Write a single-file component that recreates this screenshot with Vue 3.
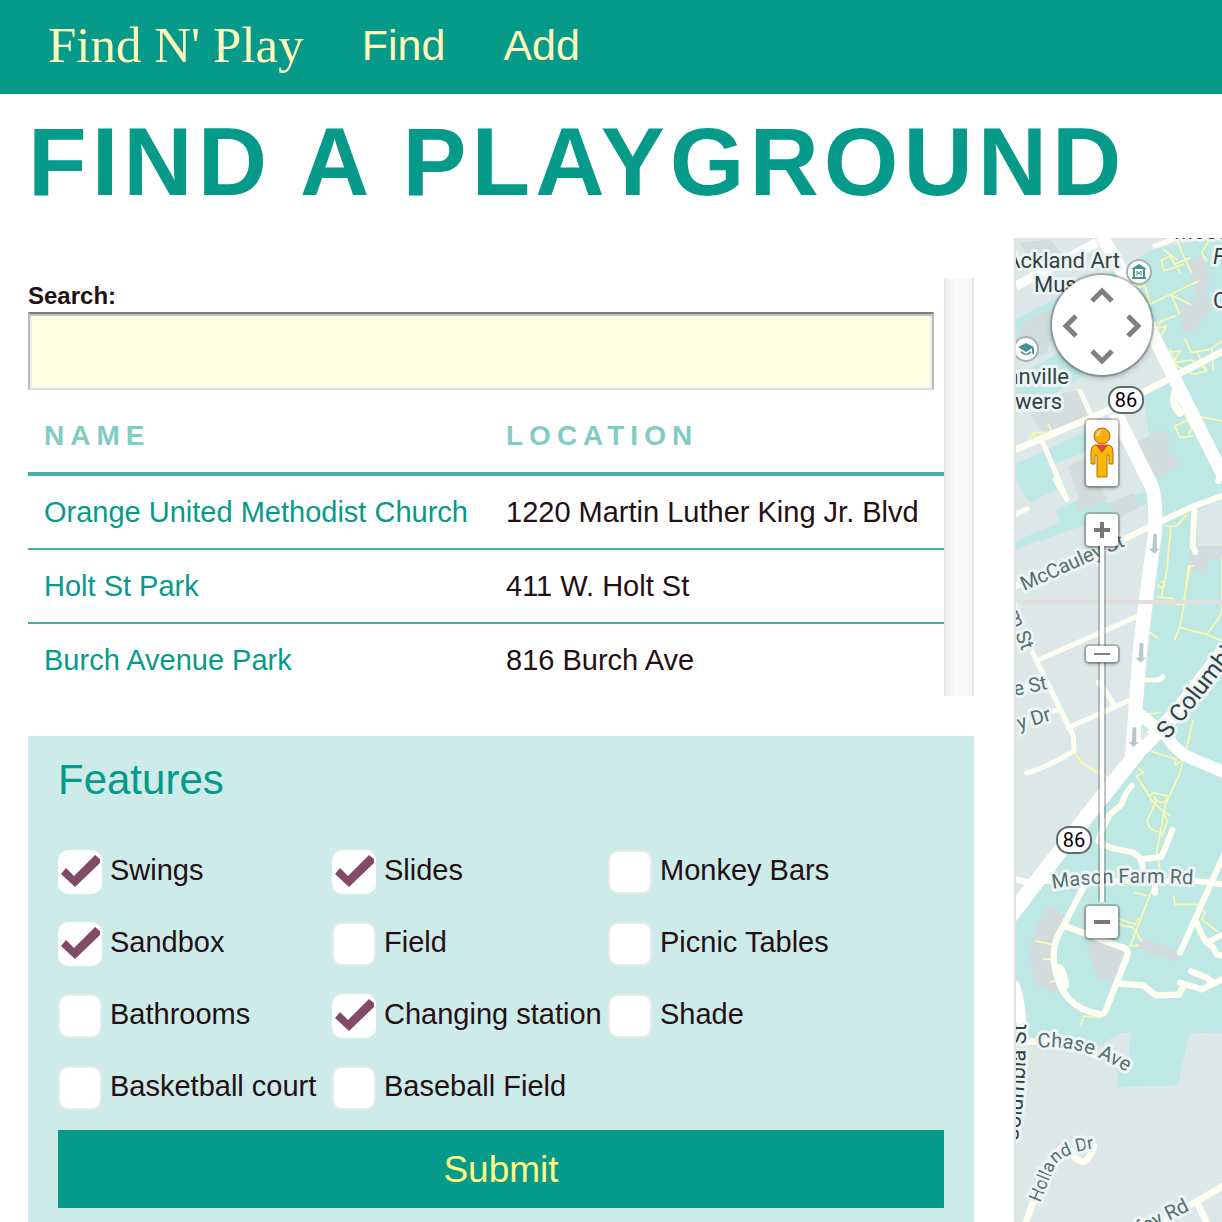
<script setup>
import { ref } from 'vue'

const query = ref('')
const zoom = ref(12)

const playgrounds = [
  { name: 'Orange United Methodist Church', location: '1220 Martin Luther King Jr. Blvd' },
  { name: 'Holt St Park', location: '411 W. Holt St' },
  { name: 'Burch Avenue Park', location: '816 Burch Ave' }
]

const features = ref([
  { label: 'Swings', on: true },
  { label: 'Slides', on: true },
  { label: 'Monkey Bars', on: false },
  { label: 'Sandbox', on: true },
  { label: 'Field', on: false },
  { label: 'Picnic Tables', on: false },
  { label: 'Bathrooms', on: false },
  { label: 'Changing station', on: true },
  { label: 'Shade', on: false },
  { label: 'Basketball court', on: false },
  { label: 'Baseball Field', on: false }
])

const directions = ['up', 'left', 'right', 'down']
</script>

<template>
  <div class="page">
    <header class="bar">
      <a class="brand" href="#">Find N' Play</a>
      <nav class="nav">
        <a href="#find">Find</a>
        <a href="#add">Add</a>
      </nav>
    </header>

    <h1 class="title">FIND A PLAYGROUND</h1>

    <main class="content">
      <div class="side">
        <section class="results">
          <div class="list">
            <label class="search-label" for="search">Search:</label>
            <input id="search" v-model="query" class="search" type="text" />
            <table class="table">
              <thead>
                <tr><th class="name-col">NAME</th><th>LOCATION</th></tr>
              </thead>
              <tbody>
                <tr v-for="p in playgrounds" :key="p.name">
                  <td><a href="#playground">{{ p.name }}</a></td>
                  <td>{{ p.location }}</td>
                </tr>
              </tbody>
            </table>
          </div>
          <div class="track"></div>
        </section>

        <form class="features" @submit.prevent>
          <h2>Features</h2>
          <div class="options">
            <label v-for="f in features" :key="f.label" class="option">
              <input v-model="f.on" type="checkbox" />
              <svg class="tick" viewBox="0 0 44 44" aria-hidden="true">
                <path d="M3 24 L8 18 L16 26 L37 5 L42 9 V13 L17 37 Z" fill="#814a66" />
              </svg>
              <span>{{ f.label }}</span>
            </label>
          </div>
          <button class="submit" type="submit">Submit</button>
        </form>
      </div>

      <section class="map" aria-label="Map">
        <svg class="ground" aria-hidden="true">
          <g transform="matrix(.333333 0 0 .333333 -4 -2)" fill="none" stroke-linecap="round" stroke-linejoin="round">
            <!-- parks and campus -->
            <g fill="#bde8e3">
              <path d="M18 250 L170 170 L260 130 L350 90 L430 40 L640 0 V710 L500 430 L430 300 L400 350 L250 400 L140 470 L18 500 V420 L150 350 L130 300 L18 320Z" />
              <path d="M400 480 L490 425 L640 700 V790 L455 870 L440 750Z" />
              <path d="M18 685 L250 575 L270 630 L120 690 L160 750 L60 800 L18 735Z" />
              <path d="M18 915 L150 860 L135 820 L240 780 L300 800 L420 762 L420 800 L330 830 L18 940Z" />
              <path d="M455 860 L640 770 V2390 L555 2391 Q538 2392 533 2412 L508 2530 Q504 2549 490 2550 L322 2552 L328 2391 L270 2430 L60 2420 L18 2290 V2052 L390 1560 L400 1400Z" />
            </g>
            <path d="M130 480 L210 460 L240 540 L100 590 L60 540Z" fill="#d4dddd" />
            <g fill="#dce8e8">
              <path d="M18 6 H430 L410 40 L310 90 L130 150 L18 200Z" />
              <path d="M562 820 L640 790 V965 H562Z" />
              <path d="M328 2391 H361 L352 2500 L322 2500Z" />
              <path d="M200 450 L430 320 L480 420 L290 510 L230 530Z" />
            </g>
            <!-- building blocks -->
            <g fill="#d3dcdc">
              <path d="M30 20 L120 10 L170 70 L80 110Z M40 260 L150 210 L180 250 L130 290 L110 350 L60 370 L18 350Z" />
              <path d="M530 80 L575 60 L600 120 L585 170 L610 210 L560 280 L520 290 L505 210 L560 190Z" />
              <path d="M375 620 L460 580 L480 610 L470 640 L510 690 L440 725 L400 680Z" />
              <path d="M205 780 L175 690 L240 660 L290 790 L200 830Z M300 800 L370 770 L385 815 L310 855Z" />
              <path d="M540 930 H640 V970 H592 V1016 L540 1000Z" />
              <path d="M115 2008 L165 2040 L125 2110 L130 2240 L165 2250 L130 2270 L75 2250 L58 2150 L75 2080Z" />
              <path d="M232 2140 L265 2090 L345 2140 L320 2240 L265 2230Z M390 2100 L512 2150 L495 2176 L380 2135Z M220 2020 L265 2040 L240 2070 L210 2060Z" />
            </g>
            <path d="M70 290 L110 265 L130 310 L85 345Z" stroke="#bde8e3" stroke-width="6" />
            <!-- foot paths -->
            <g stroke="#fcf8ae" stroke-width="5">
              <path d="M450 75 L480 60 L495 85 L540 65 M455 75 L462 105 L520 85 M505 20 L520 60 L545 110 M480 60 L510 110 M460 40 L500 70 M600 10 L575 50 L590 75" />
              <path d="M380 155 L405 150 L420 205 L565 135 M485 178 L508 232 M485 178 L540 205 M430 265 L495 240 M430 280 L470 270 L440 320 L470 350 L510 345 L490 380 L545 372 L590 400 M470 350 L500 390 L480 340 M525 310 L545 350 L600 340 L636 315 M560 345 L590 405 L550 415 L500 390 M605 340 L610 400 M450 265 Q410 290 460 330" />
              <path d="M636 555 L560 540 L495 570 L510 605 L550 600 M525 535 L545 575 L535 600 M55 610 L70 590 H130 M115 565 L125 590 M70 590 L75 610" />
              <path d="M465 870 H500 L530 835 M482 870 L472 995 L455 1080 M440 1083 L490 1088 M445 1045 A9 9 0 1 0 455 1037 M550 990 H535 L522 1105 L500 1105 M522 1105 L510 1172 L495 1210 M540 995 L522 1090 M510 1175 L590 1195 L610 1170 L636 1130 V960 M590 1195 L636 1215 M420 1190 L445 1207 M570 1310 L550 1370 M540 1335 H590 M410 1435 L450 1430 M550 1452 L510 1610 L465 1710 L440 1850 L450 1900 L360 2130" />
              <path d="M195 1550 L220 1585 L305 1632 M420 1545 L500 1570 Q480 1605 530 1560 M540 1500 L535 1520 M385 1595 L400 1610 L380 1620 L430 1700 Q410 1680 430 1670 L470 1680 Q475 1695 455 1700 Q430 1695 435 1680 M430 1700 L460 1725 L480 1740 M440 1690 L412 1755 Q415 1785 460 1790 M455 1720 L472 1755 L455 1800 M375 1970 L410 1980 M325 2048 L375 2065 L385 2050 M325 2065 L370 2075 L395 2115 M360 2130 L385 2128 M492 1980 L495 2005 L560 2005 L585 2030 L575 2050 L620 2085 M78 2115 L125 2125 M100 2170 H130 M120 2240 L150 2225 M212 2365 L222 2340 L270 2345" />
            </g>
            <!-- streets -->
            <g stroke="#fffef2" stroke-width="15">
              <path d="M18 640 L290 525 L640 345" stroke-width="20" />
              <path d="M210 465 L240 530 M95 610 L170 790 M435 30 L500 6 M135 730 L170 790 M18 835 L52 818" />
              <path d="M500 460 Q480 500 510 530" stroke-width="24" />
              <path d="M18 1050 L340 910 L540 815 L640 778 M553 825 L548 930 L556 948 M640 700 L625 735" stroke-width="18" />
              <path d="M90 1270 L385 1140 M68 1250 L190 1500 L192 1545 Q120 1590 50 1611 M175 1475 L365 1390 M265 1340 Q300 1380 310 1405 M18 1370 L55 1350 M18 1455 L150 1420 M410 1332 H440 Q455 1330 458 1322" />
              <path d="M365 1650 Q345 1670 335 1705 L300 1735 Q270 1790 265 1815 M265 1815 L300 1835 L370 1850 Q400 1865 398 1900 V1910 M398 1870 L455 1862 L487 1782 M18 1930 Q60 1945 100 1935 H560 L640 1945 M435 1935 V1970 M640 1860 L510 2150 M560 2060 Q580 2110 590 2120 L610 2135 L620 2155 L640 2160 M590 2120 L640 2095" stroke-width="18" />
              <path d="M225 1945 L160 2070 Q125 2120 132 2180 Q150 2320 275 2335 Q285 2332 292 2310 L350 2165 Q358 2140 340 2135 L165 2070 M150 2195 Q165 2210 168 2250 Q155 2260 145 2220 M325 2243 L400 2248 Q425 2270 440 2278 L507 2276 L520 2250 M510 2240 L575 2260 L636 2230 M543 2206 L590 2225 L610 2240" stroke-width="19" />
              <path d="M18 2417 H100 Q190 2415 260 2460 M45 2965 L80 2870 Q110 2790 150 2740 M180 2740 Q190 2772 220 2778 Q235 2774 252 2730 L240 2715 M560 2896 L640 2850 M560 2896 L600 2980 M560 2896 L420 2975" stroke-width="20" />
            </g>
            <!-- main roads -->
            <g stroke="#fff" stroke-linecap="butt">
              <path d="M18 150 L260 20" stroke-width="28" />
              <path d="M275 0 L330 95 L490 420 L645 730" stroke-width="40" />
              <path d="M315 530 L425 750 Q440 800 435 890 Q395 1180 388 1260 L365 1580" stroke-width="42" />
              <path d="M645 1240 L500 1430 L390 1540 L200 1780 L-20 2068" stroke-width="46" />
              <path d="M370 1420 L470 1500 Q500 1550 540 1565 L645 1610" stroke-width="36" />
              <path d="M10 2240 Q40 2300 32 2430" stroke-width="30" />
            </g>
            <path d="M395 1475 L418 1495 L395 1515Z" fill="#dce8e8" />
            <g fill="#b9c9c9">
              <path id="arrow" d="M430 894 H441 V938 H449 L433 953 L417 938 H427Z" />
              <use href="#arrow" x="-41" y="327" />
              <use href="#arrow" x="-62" y="580" />
            </g>
            <path d="M18 1098 H640" stroke="#e0dfdc" stroke-width="12" stroke-linecap="butt" />
          </g>

          <!-- labels -->
          <defs>
            <path id="mason" d="M39 651 Q90 641 190 647" />
            <path id="chase" d="M24 810 Q68 804 122 840" />
            <path id="holland" d="M26 965 L40 930 Q46 915 84 910" />
            <path id="columbia" d="M-6 940 Q12 890 12 786" />
          </defs>
          <g class="label">
            <text x="106" y="30" text-anchor="end">Ackland Art</text>
            <text x="20" y="54">Mus</text>
            <text x="55" y="146" text-anchor="end">Granville</text>
            <text x="48" y="171" text-anchor="end">Towers</text>
            <text x="160" y="1">Mose</text>
            <text x="199" y="26" font-style="italic">F</text>
            <text x="199" y="70">C</text>
            <text class="big" transform="translate(154 502) rotate(-52)">S Columbia</text>
            <text><textPath href="#columbia" startOffset="100%" text-anchor="end">Columbia St</textPath></text>
          </g>
          <g class="label street">
            <text transform="translate(10 353) rotate(-24)">McCauley St</text>
            <text transform="translate(8 413) rotate(68)" text-anchor="end">Ransom St</text>
            <text transform="translate(34 451) rotate(-12)" text-anchor="end">e St</text>
            <text transform="translate(38 482) rotate(-17)" text-anchor="end">y Dr</text>
            <text><textPath href="#mason">Mason Farm Rd</textPath></text>
            <text><textPath href="#chase">Chase Ave</textPath></text>
            <text class="small"><textPath href="#holland">Holland Dr</textPath></text>
            <text transform="translate(176 972) rotate(-27)" text-anchor="end">Purefoy Rd</text>
          </g>

          <!-- route shields -->
          <g class="shield">
            <rect x="95" y="149" width="34" height="26" rx="12" />
            <text x="112" y="169" text-anchor="middle">86</text>
            <rect x="43" y="589" width="34" height="26" rx="12" />
            <text x="60" y="609" text-anchor="middle">86</text>
          </g>

          <!-- places -->
          <g transform="translate(125 34)">
            <circle r="12" fill="#fff" stroke="#a3b5b3" stroke-width="2" />
            <path d="M-8 -3 L0 -8 L8 -3Z M-6 -3 H-4 V5 H-6Z M4 -3 H6 V5 H4Z M-7 5 H7 V7 H-7Z" fill="#46938d" />
            <path d="M-2 4 V-1 L0 2 L2 -1 V4" fill="none" stroke="#46938d" stroke-width="1" />
          </g>
          <g transform="translate(12 111)">
            <circle r="12" fill="#fff" stroke="#a3b5b3" stroke-width="2" />
            <path d="M-8 -2 L0 -6 L8 -2 L0 3Z M-5 2 L0 5 L5 2 V4 Q0 8 -5 4Z M6 -1 H8 V6 L6 4Z" fill="#46938d" />
          </g>
        </svg>

        <div class="pan">
          <button v-for="d in directions" :key="d" :class="d" type="button" :aria-label="'Pan ' + d">
            <svg width="24" height="24" viewBox="0 0 24 24"><path d="M2 17 L12 7 L22 17" fill="none" stroke="#808080" stroke-width="5" /></svg>
          </button>
        </div>
        <button class="control pegman" type="button" aria-label="Street view">
          <svg width="24" height="54" viewBox="0 0 24 54">
            <path d="M5 19 H19 Q23 20 23 25 V38 H19 V29 H17 V51 H7 V29 H5 V38 H1 V25 Q1 20 5 19Z" fill="#f6b800" stroke="#b86b12" stroke-width="1" />
            <path d="M6 19 H18 L12 27Z" fill="#dc4b35" />
            <circle cx="12" cy="10" r="8" fill="#f8ac10" stroke="#b5651d" stroke-width="1" />
            <path d="M6 10 Q7 4 12 4 Q9 7 9 10Z" fill="#ffe389" />
          </svg>
        </button>
        <button class="control plus" type="button" aria-label="Zoom in">
          <svg width="16" height="16" viewBox="0 0 16 16"><path d="M0 8 H16 M8 0 V16" stroke="#777" stroke-width="4" /></svg>
        </button>
        <input v-model="zoom" class="zoom" type="range" min="0" max="17" aria-label="Zoom level" />
        <button class="control minus" type="button" aria-label="Zoom out">
          <svg width="16" height="16" viewBox="0 0 16 16"><path d="M0 8 H16" stroke="#777" stroke-width="4" /></svg>
        </button>
      </section>
    </main>
  </div>
</template>

<style>
body {
  margin: 0;
  background: #fff;
}
</style>

<style scoped>
.page {
  font-family: "Liberation Sans", Arial, sans-serif;
  font-size: 29px;
  color: #231014;
}
.page *,
.page *::before {
  box-sizing: border-box;
}
a {
  color: #059a8a;
  text-decoration: none;
}
.bar {
  display: flex;
  align-items: center;
  gap: 58px;
  height: 94px;
  padding: 0 48px 4px;
  background: #059a8a;
  font-size: 43px;
}
.bar a {
  color: #fff6ba;
}
.brand {
  font-family: "Liberation Serif", serif;
  font-size: 51px;
}
.nav {
  display: flex;
  gap: 58px;
}
.title {
  margin: 0;
  padding: 14px 28px 0;
  height: 144px;
  font-size: 96px;
  line-height: 108px;
  letter-spacing: 5px;
  white-space: nowrap;
  color: #059a8a;
}
.content {
  display: grid;
  grid-template-columns: minmax(0, 946fr) minmax(0, 208fr);
  gap: 40px;
  padding-left: 28px;
}
.side {
  display: flex;
  flex-direction: column;
  gap: 40px;
  padding-top: 40px;
}
.results {
  display: flex;
}
.list {
  flex: 1;
  min-width: 0;
}
.track {
  width: 30px;
  border: 2px solid #e8e8e8;
  border-width: 0 2px;
  background: linear-gradient(90deg, #f0f0f0, #fafafa 40%, #fafafa 80%, #f4f4f4);
}
.search-label {
  display: block;
  height: 34px;
  font-size: 24px;
  font-weight: bold;
  line-height: 36px;
}
.search {
  display: block;
  width: calc(100% - 10px);
  height: 78px;
  padding: 8px;
  border: 2px solid;
  border-color: #7b7d78 #bcbcbc #dcdcdc;
  border-radius: 0;
  box-shadow: inset 0 2px #c3c3b8, inset 2px 0 #eeeee6, inset -2px 0 #eeeee6, inset 0 -2px #fafaf8;
  background: #ffffe3;
  font: inherit;
  outline: none;
}
.table {
  width: 100%;
  border-collapse: separate;
  border-spacing: 0;
  table-layout: fixed;
}
.name-col {
  width: 462px;
}
th {
  height: 86px;
  padding: 10px 16px 0;
  border-bottom: 4px solid #45b0a8;
  text-align: left;
  font-size: 28px;
  letter-spacing: 6px;
  color: #82ccc4;
}
td {
  height: 74px;
  padding: 0 16px;
  white-space: nowrap;
  border-bottom: 2px solid #45b0a8;
}
tbody tr:last-child td {
  height: 72px;
  border-bottom: 0;
}
.features {
  padding: 20px 30px 14px;
  background: #cdebe8;
}
.features h2 {
  margin: 0 0 46px;
  font-size: 42px;
  font-weight: normal;
  line-height: 48px;
  color: #059a8a;
}
.options {
  display: grid;
  grid-template-columns: minmax(0, 274fr) minmax(0, 276fr) minmax(0, 336fr);
  row-gap: 28px;
}
.option {
  position: relative;
  display: flex;
  gap: 8px;
  line-height: 40px;
  white-space: nowrap;
}
.option input {
  appearance: none;
  flex: none;
  width: 44px;
  height: 44px;
  margin: 0;
  border: 2px solid #e9e9e9;
  border-radius: 10px;
  background: #fff;
}
.option input:checked {
  border-color: #fff;
}
.tick {
  display: none;
  position: absolute;
  left: 0;
  top: 0;
  width: 44px;
  height: 44px;
}
.option input:checked + .tick {
  display: block;
}
.submit {
  display: block;
  width: 100%;
  height: 78px;
  margin-top: 20px;
  padding: 2px 0 0;
  border: 0;
  background: #059a8a;
  color: #fffa85;
  font: inherit;
  font-size: 37px;
}
.map {
  position: relative;
  overflow: hidden;
  background: #dce8e8;
  border-left: 2px solid #e0e0de;
}
.ground {
  position: absolute;
  left: -2px;
  top: 0;
  width: calc(100% + 2px);
  height: 100%;
}
.label {
  font-family: Roboto, sans-serif;
  font-size: 22px;
  fill: #2f4344;
  stroke: #edf4f3;
  stroke-width: 6px;
  stroke-linejoin: round;
  paint-order: stroke;
}
.street {
  font-size: 20px;
  fill: #52706d;
}
.big {
  font-size: 24px;
}
.small {
  font-size: 18px;
}
.shield {
  font-family: Roboto, sans-serif;
  font-size: 20px;
}
.shield rect {
  fill: #fff;
  stroke: #606b6b;
  stroke-width: 2px;
}
.pan {
  position: absolute;
  left: 36px;
  top: 37px;
  display: grid;
  grid-template: repeat(3, 1fr) / repeat(3, 1fr);
  width: 100px;
  height: 100px;
  padding: 6px 4px 4px;
  border-radius: 50%;
  background: #fff;
  box-shadow: 0 0 0 2px rgba(0, 0, 0, 0.2), 0 2px 6px rgba(0, 0, 0, 0.35);
}
.pan button {
  display: grid;
  place-items: center;
  padding: 0;
  border: 0;
  background: none;
}
.pan .up {
  grid-area: 1 / 2;
}
.pan .left {
  grid-area: 2 / 1;
}
.pan .right {
  grid-area: 2 / 3;
}
.pan .down {
  grid-area: 3 / 2;
}
.left svg {
  transform: rotate(-90deg);
}
.right svg {
  transform: rotate(90deg);
}
.down svg {
  transform: rotate(180deg);
}
.control {
  position: absolute;
  left: 70px;
  display: grid;
  place-items: center;
  width: 32px;
  height: 32px;
  padding: 0;
  border: 0;
  border-radius: 3px;
  background: #fff;
  box-shadow: 0 0 0 2px rgba(0, 0, 0, 0.2), 0 2px 5px rgba(0, 0, 0, 0.3);
}
.pegman {
  top: 182px;
  height: 66px;
}
.plus {
  top: 276px;
}
.minus {
  top: 668px;
}
.zoom {
  position: absolute;
  left: 68px;
  top: 308px;
  width: 36px;
  height: 356px;
  margin: 0;
  appearance: none;
  writing-mode: vertical-lr;
  direction: rtl;
  background: linear-gradient(90deg, transparent 14px, rgba(90, 90, 90, 0.35) 14px 16px, #fff 16px 20px, rgba(90, 90, 90, 0.35) 20px 22px, transparent 22px);
}
.zoom::-webkit-slider-thumb {
  appearance: none;
  width: 32px;
  height: 16px;
  border-radius: 3px;
  background: linear-gradient(#808080, #808080) center / 16px 2px no-repeat #fff;
  box-shadow: 0 0 0 2px rgba(0, 0, 0, 0.2), 0 2px 4px rgba(0, 0, 0, 0.3);
}
</style>
